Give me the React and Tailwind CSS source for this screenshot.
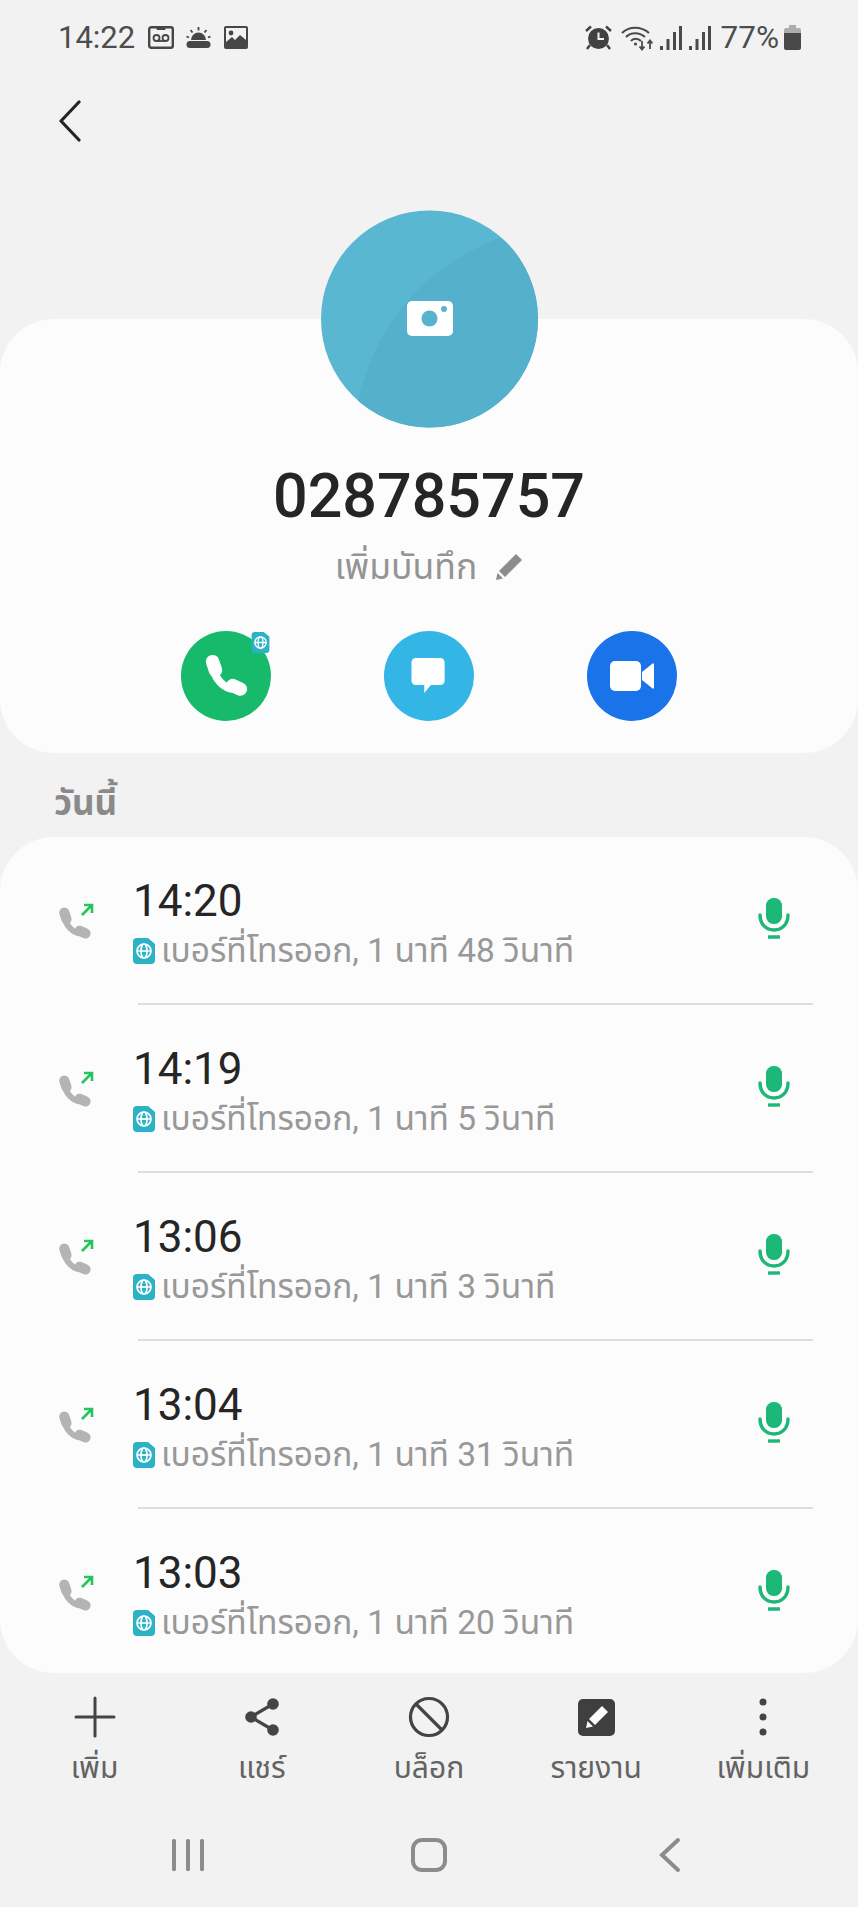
const FONT = "font-['Roboto','Noto_Sans','Noto_Sans_Thai','Noto_Sans_CJK_SC',sans-serif]";

function SimGlobe({ size = 22, height = 26, cls = "" }) {
  return (
    <svg width={size} height={height} viewBox="0 0 22 26" className={cls}>
      <path d="M4 0H15L22 6V22a4 4 0 0 1-4 4H4a4 4 0 0 1-4-4V4a4 4 0 0 1 4-4Z" fill="#2bb2c4" />
      <g fill="none" stroke="#fff" strokeWidth="1.7">
        <circle cx="11" cy="13" r="7" />
        <ellipse cx="11" cy="13" rx="3" ry="7" />
        <path d="M4 13H18" />
      </g>
    </svg>
  );
}

function Handset({ size, color, sw = 1 }) {
  return (
    <svg width={size} height={size} viewBox="0 0 24 24" fill="none" stroke={color} strokeLinecap="round">
      <path d="M5.500 6C5 12.500 11 20 18.500 18.500" strokeWidth={3.2 * sw} />
      <path d="M5 4.500 6.500 9" strokeWidth={5.4 * sw} />
      <path d="M15.500 17 19.500 18.800" strokeWidth={5.4 * sw} />
    </svg>
  );
}

function Mic() {
  return (
    <svg width="32" height="42" viewBox="0 0 32 42" fill="none">
      <rect x="8" y="0" width="16" height="26" rx="7.5" fill="#1db877" />
      <path d="M2 17C2 26 8 32 16 32S30 26 30 17" stroke="#1db877" strokeWidth="3.4" strokeLinecap="round" />
      <path d="M10 39H22" stroke="#1db877" strokeWidth="3.4" />
    </svg>
  );
}

function CallIcon() {
  return (
    <div className="relative h-[40px] w-[36px]">
      <div className="absolute left-0 top-[3px]">
        <Handset size={35} color="#b4b4b4" sw={1.3} />
      </div>
      <svg className="absolute left-[23px] top-0" width="14" height="14" viewBox="0 0 14 14" fill="none" stroke="#22c55e" strokeWidth="2.6">
        <path d="M2 12 12 2M4 2H12V10" />
      </svg>
    </div>
  );
}

const calls = [
  ["14:20", "เบอร์ที่โทรออก, 1 นาที 48 วินาที"],
  ["14:19", "เบอร์ที่โทรออก, 1 นาที 5 วินาที"],
  ["13:06", "เบอร์ที่โทรออก, 1 นาที 3 วินาที"],
  ["13:04", "เบอร์ที่โทรออก, 1 นาที 31 วินาที"],
  ["13:03", "เบอร์ที่โทรออก, 1 นาที 20 วินาที"],
];

function StatusBar() {
  return (
    <div className="flex h-[75px] items-center justify-between pl-[58px] pr-[57px] text-[#4d4d4d]">
      <div className="flex items-center">
        <span className="text-[31px] font-normal leading-none">14:22</span>
        <svg className="ml-[13px]" width="26" height="23" viewBox="0 0 26 23" fill="none" stroke="#464646" strokeWidth="2.4">
          <rect x="1.2" y="1.2" width="23.6" height="20.6" rx="2" />
          <circle cx="8.5" cy="12" r="3" strokeWidth="1.8" />
          <circle cx="17.5" cy="12" r="3" strokeWidth="1.8" />
          <path d="M8.5 15H17.5" strokeWidth="1.8" />
          <path d="M9 1.5H17V3.5H9Z" fill="#464646" strokeWidth="1" />
        </svg>
        <svg className="ml-[12px]" width="25" height="22" viewBox="0 0 25 22" fill="#464646" stroke="none">
          <path d="M5 13a7.5 7.5 0 0 1 15 0Z" />
          <rect x="0.5" y="14" width="24" height="7" rx="3.5" />
          <g stroke="#464646" strokeWidth="1.8">
            <path d="M12.5 0V3.5M4.5 3 6.5 5.5M20.5 3 18.5 5.5M0.5 9.5 3 10.5M24.5 9.5 22 10.5" />
          </g>
        </svg>
        <svg className="ml-[13px]" width="24" height="23" viewBox="0 0 24 23">
          <rect width="24" height="23" rx="2" fill="#464646" />
          <rect x="2" y="2" width="20" height="19" fill="#f2f2f2" />
          <circle cx="7" cy="7" r="2.4" fill="#464646" />
          <path d="M2 16 8 11 11 14 16 9 22 14V21H2Z" fill="#464646" />
        </svg>
      </div>
      <div className="flex items-center">
        <svg width="27" height="25" viewBox="0 0 27 25" fill="#414141">
          <circle cx="13.5" cy="13.5" r="10.5" />
          <path d="M13.5 7.5V14H19" stroke="#f2f2f2" strokeWidth="2" fill="none" />
          <path d="M1 6 6 1.5M26 6 21 1.5M5 20 2 24M22 20 25 24" stroke="#414141" strokeWidth="2.4" fill="none" />
        </svg>
        <svg className="ml-[9px]" width="32" height="26" viewBox="0 0 32 26" fill="none" stroke="#4a4a4a" strokeWidth="2.2">
          <path d="M1 8C8 1 20 1 28 8M5 12C10 7 18 7 24 12M10 16C12 13 17 13 20 16" />
          <circle cx="14.5" cy="19" r="1.6" fill="#4a4a4a" stroke="none" />
          <path d="M21 16V24M18.5 21.5 21 24.5 23.5 21.5M29 24V16M26.5 18.5 29 15.5 31.5 18.5" strokeWidth="1.8" />
        </svg>
        {[0, 1].map((k) => (
          <svg key={k} className="ml-[7px]" width="22" height="24" viewBox="0 0 22 24" fill="#4a4a4a">
            <rect x="0" y="20" width="3" height="4" />
            <rect x="6.500" y="13" width="3" height="11" />
            <rect x="13" y="6" width="3" height="18" />
            <rect x="19" y="0" width="3" height="24" />
          </svg>
        ))}
        <span className="ml-[10px] text-[31.500px] font-normal leading-none">77%</span>
        <svg className="ml-[5px]" width="17" height="25" viewBox="0 0 17 25">
          <path d="M5 0H12V3H15a2 2 0 0 1 2 2V8H0V5a2 2 0 0 1 2-2H5Z" fill="#adadad" />
          <path d="M0 8H17V23a2 2 0 0 1-2 2H2a2 2 0 0 1-2-2Z" fill="#484848" />
        </svg>
      </div>
    </div>
  );
}

function ActionButton({ bg, children, badge }) {
  return (
    <div className={`relative flex h-[90px] w-[90px] items-center justify-center rounded-full ${bg}`}>
      {children}
      {badge && (
        <div className="absolute right-[1px] top-[1px]">
          <SimGlobe size={19} height={21} />
        </div>
      )}
    </div>
  );
}

function ProfileCard() {
  return (
    <div className="relative mt-[-109px] flex h-[434px] flex-col items-center rounded-[54px] bg-[#fcfcfc]">
      <h1 className="mt-[146px] text-[61px] font-medium leading-[62px] tracking-normal text-[#252525]">028785757</h1>
      <div className="mt-[20px] flex items-center text-[#949494]">
        <span className="text-[35.500px] leading-[40px]">เพิ่มบันทึก</span>
        <svg className="ml-[18px]" width="28" height="28" viewBox="0 0 28 28" fill="#8c8c8c">
          <path d="M21 1 27 7 10 24 4 18Z" />
          <path d="M2.5 20 8 25.5 1 27Z" />
        </svg>
      </div>
      <div className="mt-[44px] flex w-[496px] justify-between">
        <ActionButton bg="bg-[#17b96b]" badge>
          <Handset size={46} color="#ffffff" sw={1.3} />
        </ActionButton>
        <ActionButton bg="bg-[#33b5e5]">
          <svg width="36" height="38" viewBox="0 0 38 38" fill="#fff">
            <path d="M5 0H31a4.500 4.500 0 0 1 4.500 4.500V24a4.500 4.500 0 0 1-4.500 4.500H21L14 37V28.500H5A4.500 4.500 0 0 1 .5 24V4.500A4.500 4.500 0 0 1 5 0Z" />
          </svg>
        </ActionButton>
        <ActionButton bg="bg-[#1a73e8]">
          <svg width="44" height="30" viewBox="0 0 44 30" fill="#fff">
            <rect x="0" y="0" width="31" height="30" rx="5" />
            <path d="M32 11 42 3a1 1 0 0 1 2 1V26a1 1 0 0 1-2 1L32 19Z" />
          </svg>
        </ActionButton>
      </div>
    </div>
  );
}

function CallRow({ time, detail }) {
  return (
    <div className="relative flex h-[168px] shrink-0 items-start pl-[133px] pr-[68px]">
      <div className="absolute left-[57px] top-[66px]">
        <CallIcon />
      </div>
      <div className="flex-1 pt-[39px]">
        <div className="text-[44px] font-normal leading-[50px] text-[#252525]">{time}</div>
        <div className="mt-[3px] flex items-center text-[#989898]">
          <SimGlobe cls="mr-[6px]" />
          <span className="text-[33.500px] leading-[44px]">{detail}</span>
        </div>
      </div>
      <div className="pt-[61px]">
        <Mic />
      </div>
      <div className="absolute bottom-0 left-[138px] right-[45px] h-[2px] bg-[#dedede]" />
    </div>
  );
}

function BottomBar() {
  const items = [
    ["เพิ่ม", <svg width="42" height="42" viewBox="0 0 42 42" stroke="#444" strokeWidth="3" strokeLinecap="round"><path d="M21 2V40M2 21H40" /></svg>],
    ["แชร์", <svg width="36" height="40" viewBox="0 0 36 40" fill="#444"><circle cx="29" cy="7" r="5.800" /><circle cx="7" cy="20" r="5.800" /><circle cx="29" cy="33" r="5.800" /><path d="M29 7 7 20 29 33" stroke="#444" strokeWidth="3.200" fill="none" /></svg>],
    ["บล็อก", <svg width="42" height="42" viewBox="0 0 42 42" fill="none" stroke="#444" strokeWidth="3.200"><circle cx="21" cy="21" r="18.500" /><path d="M8 8 34 34" /></svg>],
    ["รายงาน", <svg width="37" height="37" viewBox="0 0 37 37"><rect width="37" height="37" rx="5" fill="#3f3f3f" /><path d="M24 7 30 13 17 26 11 20Z" fill="#fcfcfc" /><path d="M9.500 22 15 27.500 8 29Z" fill="#fcfcfc" /></svg>],
    ["เพิ่มเติม", <svg width="8" height="38" viewBox="0 0 8 38" fill="#444"><circle cx="4" cy="4" r="3.500" /><circle cx="4" cy="19" r="3.500" /><circle cx="4" cy="34" r="3.500" /></svg>],
  ];
  return (
    <div className="mt-[20px] grid grid-cols-5 px-[11px]">
      {items.map(([label, icon]) => (
        <div key={label} className="flex flex-col items-center">
          <div className="flex h-[48px] items-center justify-center">{icon}</div>
          <span className="mt-[5px] text-[30px] leading-[44px] text-[#636363]">{label}</span>
        </div>
      ))}
    </div>
  );
}

function NavBar() {
  return (
    <div className="mt-[47px] grid grid-cols-3 items-center px-[67px]">
      <div className="flex justify-center">
        <svg width="34" height="34" viewBox="0 0 34 34" fill="#8c8c8c">
          <rect x="1" y="1" width="4" height="32" rx="1.500" />
          <rect x="15" y="1" width="4" height="32" rx="1.500" />
          <rect x="29" y="1" width="4" height="32" rx="1.500" />
        </svg>
      </div>
      <div className="flex justify-center">
        <svg width="36" height="34" viewBox="0 0 36 34" fill="none" stroke="#8c8c8c" strokeWidth="4">
          <rect x="2" y="2" width="32" height="30" rx="9" />
        </svg>
      </div>
      <div className="flex justify-center">
        <svg width="22" height="36" viewBox="0 0 22 36" fill="none" stroke="#8c8c8c" strokeWidth="4" strokeLinecap="round">
          <path d="M19 3 3 18 19 33" />
        </svg>
      </div>
    </div>
  );
}

export default function App() {
  return (
    <div className={`${FONT} h-[1907px] w-[858px] overflow-hidden bg-[#f2f2f2]`}>
      <StatusBar />
      <div className="flex h-[135px] items-start pl-[59px] pt-[25px]">
        <svg width="22" height="42" viewBox="0 0 22 42" fill="none" stroke="#252525" strokeWidth="3.200" strokeLinecap="round" strokeLinejoin="round">
          <path d="M20 2 2 21 20 40" />
        </svg>
      </div>
      <div className="relative z-10 flex justify-center">
        <svg width="217" height="218" viewBox="0 0 217 218">
          <defs>
            <clipPath id="avatarClip">
              <circle cx="108.500" cy="109" r="108.500" />
            </clipPath>
          </defs>
          <circle cx="108.500" cy="109" r="108.500" fill="#5ab7d1" />
          <path d="M36 195C55 110 105 55 185 25L230 25V230H36Z" fill="#55b0cc" clipPath="url(#avatarClip)" />
          <path d="M86 96a5 5 0 0 1 5-5h36a5 5 0 0 1 5 5v25a5 5 0 0 1-5 5H91a5 5 0 0 1-5-5Z" fill="#fff" />
          <circle cx="108.500" cy="108.500" r="8" fill="#58b4ce" />
          <circle cx="123" cy="99" r="3" fill="#58b4ce" />
        </svg>
      </div>
      <ProfileCard />
      <div className="h-[84px] pl-[54px] pt-[29px] text-[35px] font-bold leading-[44px] text-[#8a8a8a]">วันนี้</div>
      <div className="flex h-[836px] flex-col overflow-hidden rounded-[54px] bg-[#fcfcfc]">
        {calls.map(([t, d]) => (
          <CallRow key={t} time={t} detail={d} />
        ))}
      </div>
      <BottomBar />
      <NavBar />
    </div>
  );
}
